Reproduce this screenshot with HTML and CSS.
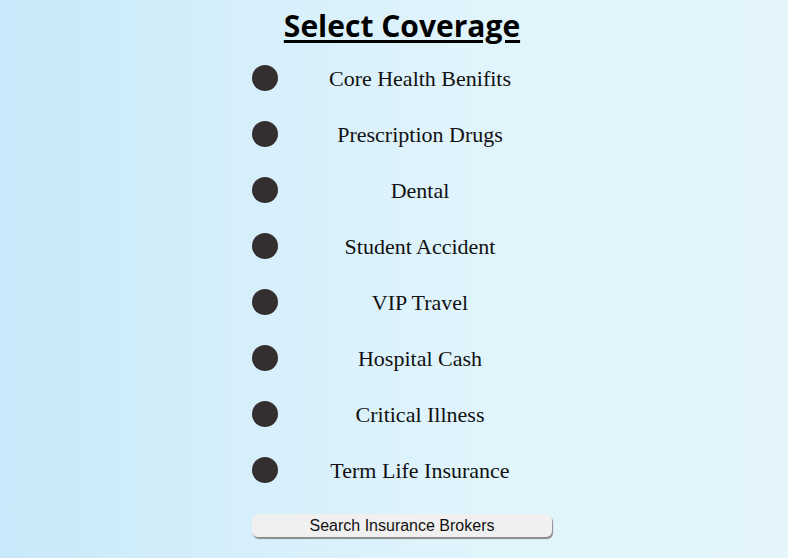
FILE: index.html
```html
<!DOCTYPE html>
<html>
<head>
<meta charset="utf-8">
<link rel="stylesheet" href="styles.css">
</head>
<body>
<main class="page">
  <h1 class="title">Select Coverage</h1>
  <ul class="options">
    <li class="option"><span class="dot"></span><span class="label">Core Health Benifits</span></li>
    <li class="option"><span class="dot"></span><span class="label">Prescription Drugs</span></li>
    <li class="option"><span class="dot"></span><span class="label">Dental</span></li>
    <li class="option"><span class="dot"></span><span class="label">Student Accident</span></li>
    <li class="option"><span class="dot"></span><span class="label">VIP Travel</span></li>
    <li class="option"><span class="dot"></span><span class="label">Hospital Cash</span></li>
    <li class="option"><span class="dot"></span><span class="label">Critical Illness</span></li>
    <li class="option"><span class="dot"></span><span class="label">Term Life Insurance</span></li>
  </ul>
  <button class="search">Search Insurance Brokers</button>
</main>
</body>
</html>
```
FILE: styles.css
```css
html, body {
  margin: 0;
  height: 100%;
}
body {
  background: linear-gradient(90deg, #c7e9f9 0%, #d6effb 30%, #e0f4fc 60%, #e4f6fc 100%);
  overflow: hidden;
}
.page {
  display: flex;
  flex-direction: column;
  align-items: center;
  padding-left: 16px;
}
.title {
  margin: 6px 0 0;
  font-family: "Open Sans", "Noto Sans", sans-serif;
  font-weight: 700;
  font-size: 30px;
  line-height: 40px;
  text-decoration: underline;
  text-decoration-thickness: 3px;
  text-underline-offset: 3px;
  color: #000;
}
.options {
  list-style: none;
  margin: 19px 0 0;
  padding: 0;
  width: 300px;
  display: flex;
  flex-direction: column;
  gap: 30px;
}
.option {
  display: flex;
  align-items: center;
  height: 26px;
}
.dot {
  width: 26px;
  height: 26px;
  border-radius: 50%;
  background: #332e2f;
  flex: none;
}
.label {
  flex: 1;
  margin-left: 10px;
  padding-top: 2px;
  text-align: center;
  font-family: "Liberation Serif", "Times New Roman", serif;
  font-size: 22px;
  color: #111;
}
.search {
  margin-top: 31px;
  width: 300px;
  height: 23px;
  padding: 0;
  font-family: "Liberation Sans", Arial, sans-serif;
  font-size: 16px;
  color: #111;
  background: #f0f0f0;
  border: none;
  border-radius: 6px;
  box-shadow: 1px 2px 1px #8a8a8a;
}
```
